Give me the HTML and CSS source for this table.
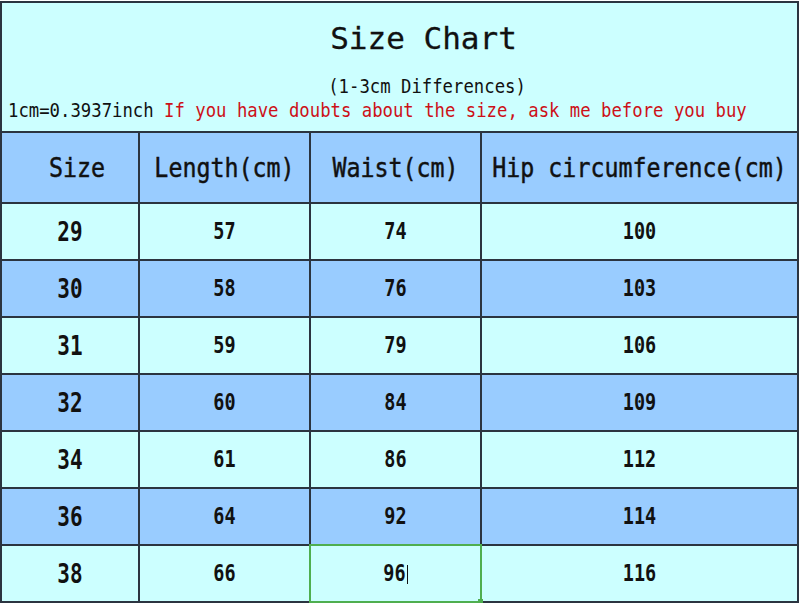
FILE: index.html
```html
<!DOCTYPE html>
<html lang="en">
<head>
<meta charset="utf-8">
<title>Size Chart</title>
<link rel="stylesheet" href="styles.css">
</head>
<body>
<table class="chart">
  <colgroup>
    <col class="c1"><col class="c2"><col class="c3"><col class="c4">
  </colgroup>
  <thead>
    <tr class="title-row">
      <th colspan="4" class="title-cell">
        <div class="title-block">
          <div class="title">Size Chart</div>
          <div class="subtitle"><span class="tall">(1-3cm Differences)</span></div>
          <div class="note"><span class="tall">1cm=0.3937inch <span class="red">If you have doubts about the size, ask me before you buy</span></span></div>
        </div>
      </th>
    </tr>
    <tr class="head-row">
      <th class="size-head"><span class="tall">Size</span></th>
      <th><span class="tall">Length(cm)</span></th>
      <th><span class="tall">Waist(cm)</span></th>
      <th><span class="tall">Hip circumference(cm)</span></th>
    </tr>
  </thead>
  <tbody>
    <tr class="light"><td class="size"><span class="tall">29</span></td><td><span class="tall">57</span></td><td><span class="tall">74</span></td><td><span class="tall">100</span></td></tr>
    <tr class="blue"><td class="size"><span class="tall">30</span></td><td><span class="tall">58</span></td><td><span class="tall">76</span></td><td><span class="tall">103</span></td></tr>
    <tr class="light"><td class="size"><span class="tall">31</span></td><td><span class="tall">59</span></td><td><span class="tall">79</span></td><td><span class="tall">106</span></td></tr>
    <tr class="blue"><td class="size"><span class="tall">32</span></td><td><span class="tall">60</span></td><td><span class="tall">84</span></td><td><span class="tall">109</span></td></tr>
    <tr class="light"><td class="size"><span class="tall">34</span></td><td><span class="tall">61</span></td><td><span class="tall">86</span></td><td><span class="tall">112</span></td></tr>
    <tr class="blue"><td class="size"><span class="tall">36</span></td><td><span class="tall">64</span></td><td><span class="tall">92</span></td><td><span class="tall">114</span></td></tr>
    <tr class="light"><td class="size"><span class="tall">38</span></td><td><span class="tall">66</span></td><td class="selected"><span class="tall">96</span><span class="caret"></span></td><td><span class="tall">116</span></td></tr>
    <tr class="blue"><td class="size"></td><td></td><td></td><td></td></tr>
  </tbody>
</table>
</body>
</html>
```

FILE: styles.css
```css
html, body {
  margin: 0;
  padding: 0;
  background: #ffffff;
  overflow: hidden;
}

body {
  padding-top: 1px;
}

.chart {
  border-collapse: collapse;
  table-layout: fixed;
  width: 797px;
  font-family: "DejaVu Sans Mono", "Liberation Mono", monospace;
  color: #111111;
}

.c1 { width: 138px; }
.c2 { width: 171px; }
.c3 { width: 171px; }
.c4 { width: 317px; }

.chart th,
.chart td {
  border: 2px solid #2b3440;
  padding: 0;
  text-align: center;
  vertical-align: middle;
}

.tall {
  display: inline-block;
  transform: scaleY(1.16);
  white-space: pre;
}

/* Title area */
.title-cell {
  background: #ccffff;
  height: 128px;
  vertical-align: top;
  font-weight: normal;
}

.title-block {
  display: flex;
  flex-direction: column;
}

.title {
  margin-top: 5px;
  height: 40px;
  line-height: 40px;
  font-size: 31px;
  padding-left: 48px;
  -webkit-text-stroke: 0.3px #111111;
}

.subtitle {
  margin-top: 17px;
  height: 22px;
  line-height: 22px;
  font-size: 17.3px;
  padding-left: 55px;
}

.note {
  margin-top: 2px;
  height: 22px;
  line-height: 22px;
  font-size: 17.3px;
  text-align: left;
  padding-left: 6px;
}

.red {
  color: #cc1018;
}

/* Header row */
.head-row th {
  background: #99ccff;
  height: 69px;
  font-size: 23.3px;
  font-weight: normal;
  -webkit-text-stroke: 0.4px #111111;
}

.head-row .tall {
  transform: scaleY(1.12);
}

.size-head {
  padding-left: 14px !important;
}

/* Data rows */
tbody td {
  height: 55px;
  font-size: 18.5px;
  font-weight: bold;
}

tbody td .tall {
  transform: scaleY(1.2);
}

tbody td.size {
  font-size: 21px;
}

tbody td.size .tall {
  transform: scaleY(1.25);
}

.light td { background: #ccffff; }
.blue td { background: #99ccff; }

.selected {
  position: relative;
  outline: 2px solid #4fae4f;
  outline-offset: -1px;
}

.selected::after {
  content: "";
  position: absolute;
  right: -3px;
  bottom: -3px;
  width: 5px;
  height: 5px;
  background: #4fae4f;
}

.caret {
  display: inline-block;
  width: 0;
  height: 19px;
  border-left: 1px solid #111111;
  margin-left: 1px;
  vertical-align: middle;
}
```
